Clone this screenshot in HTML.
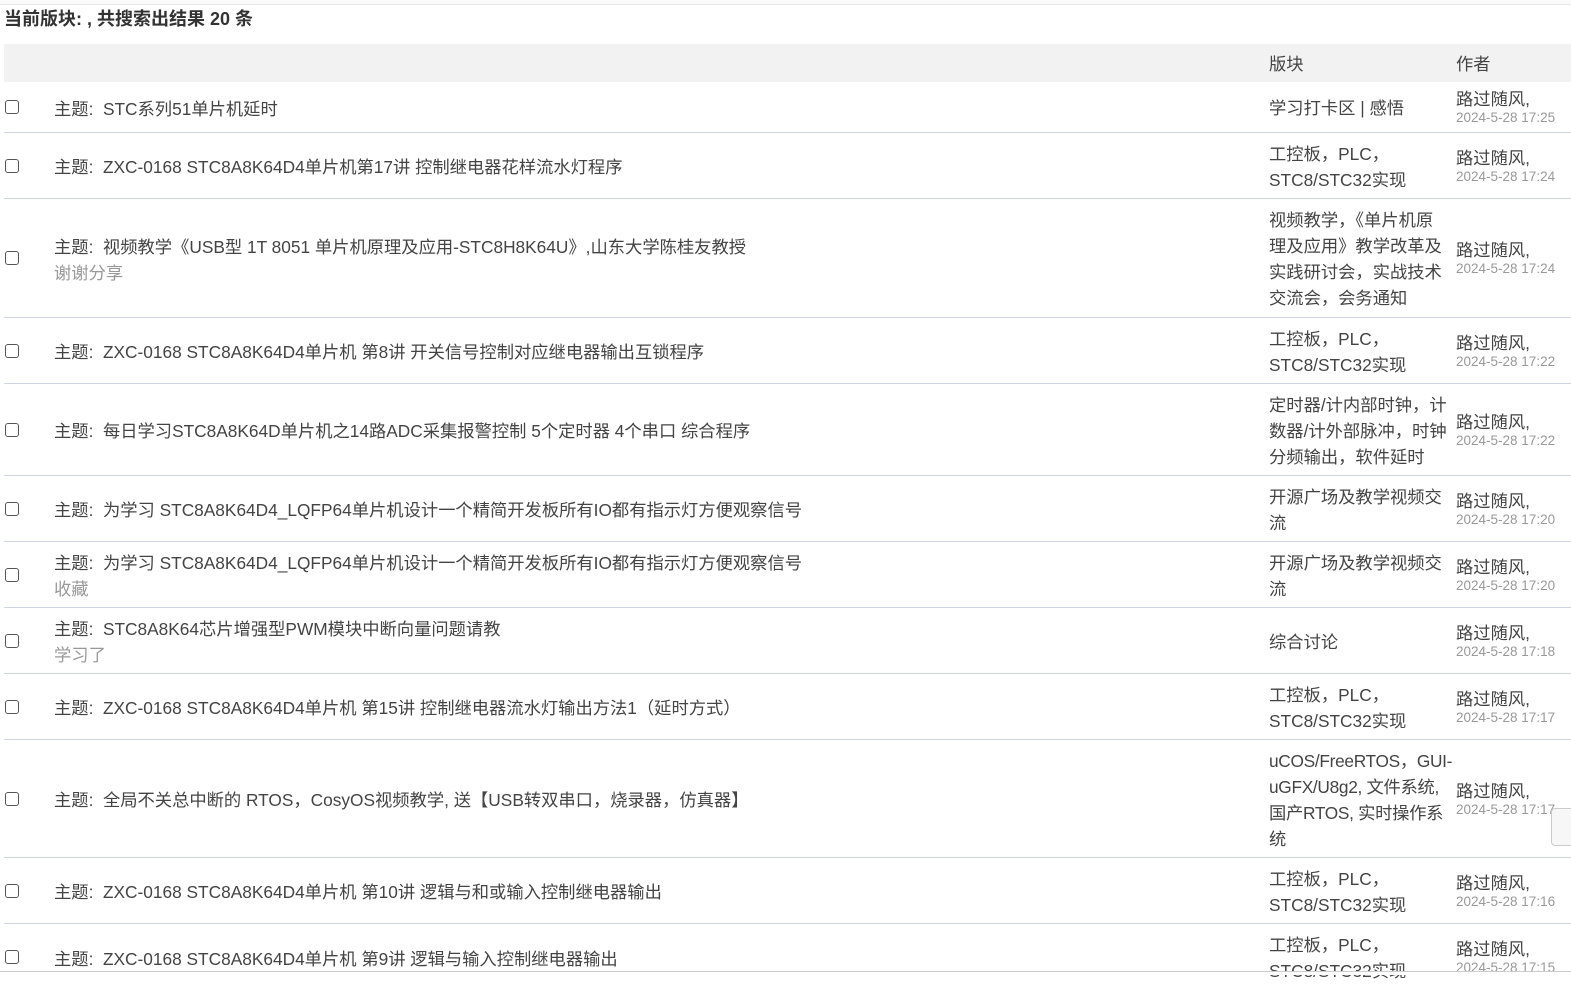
<!DOCTYPE html>
<html><head><meta charset="utf-8"><style>
*{margin:0;padding:0;box-sizing:border-box}
body{width:1571px;height:975px;overflow:hidden;background:#fff;font-family:"Liberation Sans","Noto Sans CJK SC",sans-serif;color:#333;position:relative}
.top{position:absolute;left:0;top:0;width:1571px;height:5px;border-bottom:1px solid #e6e6e6;background:#fafafa}
h1{position:absolute;left:4px;top:7px;font-size:18px;font-weight:bold;color:#333;line-height:24px}
.hd{position:absolute;left:4px;top:44px;width:1567px;height:38px;background:#f2f2f2;font-size:17.3px;color:#444}
.hd span{position:absolute;top:6px}
.r{position:absolute;left:4px;width:1567px;border-bottom:1px solid #cdd6df;font-size:17.3px;color:#444}
.cb{position:absolute;left:1px;top:50%;margin-top:-7px;width:14px;height:14px;border:1px solid #555;border-radius:3px;background:#fff}
.s{position:absolute;left:50px;top:3px;bottom:0;display:flex;flex-direction:column;justify-content:center;line-height:26px;white-space:nowrap}
.s i{font-style:normal;color:#999}
.f{position:absolute;left:1262px;width:180px;top:2px;bottom:0;display:flex;flex-direction:column;justify-content:center;line-height:26px}
.a{position:absolute;left:1449px;top:0;bottom:0;display:flex;flex-direction:column;justify-content:center;line-height:22px;white-space:nowrap}
.a small{font-size:13.5px;color:#999;line-height:16px;font-family:"Liberation Sans",sans-serif}
.bot{position:absolute;left:0;top:971px;width:1571px;border-top:1px solid #ccc}
.hd span:first-child,.f{margin-left:3px}
.hd span:last-child,.a{margin-left:3px}
</style></head><body>
<div class="top"></div>
<h1>当前版块: , 共搜索出结果 20 条</h1>
<div class="hd"><span style="left:1262px">版块</span><span style="left:1449px">作者</span></div>

<div class="r" style="top:82px;height:51px"><div class="cb"></div><div class="s"><div>主题:&nbsp; STC系列51单片机延时</div></div><div class="f"><div>学习打卡区 | 感悟</div></div><div class="a"><div>路过随风,</div><small>2024-5-28 17:25</small></div></div>

<div class="r" style="top:133px;height:66px"><div class="cb"></div><div class="s"><div>主题:&nbsp; ZXC-0168 STC8A8K64D4单片机第17讲 控制继电器花样流水灯程序</div></div><div class="f"><div>工控板，PLC，STC8/STC32实现</div></div><div class="a"><div>路过随风,</div><small>2024-5-28 17:24</small></div></div>

<div class="r" style="top:199px;height:119px"><div class="cb"></div><div class="s"><div>主题:&nbsp; 视频教学《USB型 1T 8051 单片机原理及应用-STC8H8K64U》,山东大学陈桂友教授</div><i>谢谢分享</i></div><div class="f"><div>视频教学，《单片机原理及应用》教学改革及实践研讨会，实战技术交流会，会务通知</div></div><div class="a"><div>路过随风,</div><small>2024-5-28 17:24</small></div></div>

<div class="r" style="top:318px;height:66px"><div class="cb"></div><div class="s"><div>主题:&nbsp; ZXC-0168 STC8A8K64D4单片机 第8讲 开关信号控制对应继电器输出互锁程序</div></div><div class="f"><div>工控板，PLC，STC8/STC32实现</div></div><div class="a"><div>路过随风,</div><small>2024-5-28 17:22</small></div></div>

<div class="r" style="top:384px;height:92px"><div class="cb"></div><div class="s"><div>主题:&nbsp; 每日学习STC8A8K64D单片机之14路ADC采集报警控制 5个定时器 4个串口 综合程序</div></div><div class="f"><div>定时器/计内部时钟，计数器/计外部脉冲，时钟分频输出，软件延时</div></div><div class="a"><div>路过随风,</div><small>2024-5-28 17:22</small></div></div>

<div class="r" style="top:476px;height:66px"><div class="cb"></div><div class="s"><div>主题:&nbsp; 为学习 STC8A8K64D4_LQFP64单片机设计一个精简开发板所有IO都有指示灯方便观察信号</div></div><div class="f"><div>开源广场及教学视频交流</div></div><div class="a"><div>路过随风,</div><small>2024-5-28 17:20</small></div></div>

<div class="r" style="top:542px;height:66px"><div class="cb"></div><div class="s"><div>主题:&nbsp; 为学习 STC8A8K64D4_LQFP64单片机设计一个精简开发板所有IO都有指示灯方便观察信号</div><i>收藏</i></div><div class="f"><div>开源广场及教学视频交流</div></div><div class="a"><div>路过随风,</div><small>2024-5-28 17:20</small></div></div>

<div class="r" style="top:608px;height:66px"><div class="cb"></div><div class="s"><div>主题:&nbsp; STC8A8K64芯片增强型PWM模块中断向量问题请教</div><i>学习了</i></div><div class="f"><div>综合讨论</div></div><div class="a"><div>路过随风,</div><small>2024-5-28 17:18</small></div></div>

<div class="r" style="top:674px;height:66px"><div class="cb"></div><div class="s"><div>主题:&nbsp; ZXC-0168 STC8A8K64D4单片机 第15讲 控制继电器流水灯输出方法1（延时方式）</div></div><div class="f"><div>工控板，PLC，STC8/STC32实现</div></div><div class="a"><div>路过随风,</div><small>2024-5-28 17:17</small></div></div>

<div class="r" style="top:740px;height:118px"><div class="cb"></div><div class="s"><div>主题:&nbsp; 全局不关总中断的 RTOS，CosyOS视频教学, 送【USB转双串口，烧录器，仿真器】</div></div><div class="f" style="white-space:nowrap;letter-spacing:-0.3px"><div>uCOS/FreeRTOS，GUI-<br>uGFX/U8g2, 文件系统,<br>国产RTOS, 实时操作系<br>统</div></div><div class="a"><div>路过随风,</div><small>2024-5-28 17:17</small></div></div>

<div class="r" style="top:858px;height:66px"><div class="cb"></div><div class="s"><div>主题:&nbsp; ZXC-0168 STC8A8K64D4单片机 第10讲 逻辑与和或输入控制继电器输出</div></div><div class="f"><div>工控板，PLC，STC8/STC32实现</div></div><div class="a"><div>路过随风,</div><small>2024-5-28 17:16</small></div></div>

<div class="r" style="top:924px;height:66px;border:none"><div class="cb"></div><div class="s"><div>主题:&nbsp; ZXC-0168 STC8A8K64D4单片机 第9讲 逻辑与输入控制继电器输出</div></div><div class="f"><div>工控板，PLC，STC8/STC32实现</div></div><div class="a"><div>路过随风,</div><small>2024-5-28 17:15</small></div></div>

<div style="position:absolute;left:1551px;top:808px;width:30px;height:38px;border:1px solid #ccc;border-radius:4px;background:#f7f7f7"></div>
<div class="bot"></div>
<div style="position:absolute;left:0;top:972px;width:1571px;height:3px;background:#fff"></div>
</body></html>
